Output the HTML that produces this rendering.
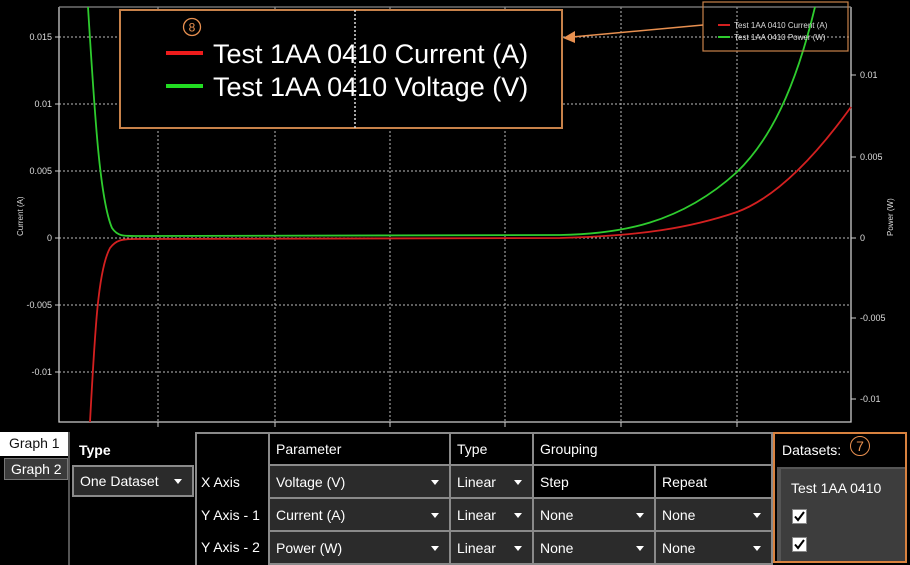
<!DOCTYPE html>
<html><head><meta charset="utf-8"><style>
*{margin:0;padding:0;box-sizing:border-box}
body{width:910px;height:565px;background:#000;overflow:hidden;position:relative;font-family:"Liberation Sans",sans-serif;color:#fff}
.a{position:absolute}
.cell{position:absolute;border:2px solid #8a8a8a;font-size:14px;padding-left:6px;display:flex;align-items:center;color:#fff}
.dd{background:#2b2b2b}
.dd::after{content:"";position:absolute;right:10px;top:50%;margin-top:-2px;border-left:4px solid transparent;border-right:4px solid transparent;border-top:5px solid #fff}
.hd{background:#000}
.cb{position:absolute;width:15px;height:15px;background:#fff;border:1px solid #888}
</style></head><body>
<svg class="a" style="left:0;top:0" width="910" height="430" xmlns="http://www.w3.org/2000/svg">
<g stroke="#bbb" stroke-width="1" stroke-dasharray="2,2">
<line x1="158" y1="7" x2="158" y2="422"/><line x1="275" y1="7" x2="275" y2="422"/><line x1="390" y1="7" x2="390" y2="422"/><line x1="505" y1="7" x2="505" y2="422"/><line x1="621" y1="7" x2="621" y2="422"/><line x1="737" y1="7" x2="737" y2="422"/>
<line x1="59" y1="37" x2="851" y2="37"/><line x1="59" y1="104" x2="851" y2="104"/><line x1="59" y1="171" x2="851" y2="171"/><line x1="59" y1="238" x2="851" y2="238"/><line x1="59" y1="305" x2="851" y2="305"/><line x1="59" y1="372" x2="851" y2="372"/>
</g>
<g stroke="#ccc" stroke-width="1.3" fill="none">
<polyline points="59,7 59,422 851,422 851,7"/>
<line x1="59" y1="7" x2="851" y2="7" stroke="#888"/>
</g>
<g stroke="#ccc" stroke-width="1">
<line x1="55" y1="37" x2="59" y2="37"/><line x1="55" y1="104" x2="59" y2="104"/><line x1="55" y1="171" x2="59" y2="171"/><line x1="55" y1="238" x2="59" y2="238"/><line x1="55" y1="305" x2="59" y2="305"/><line x1="55" y1="372" x2="59" y2="372"/>
<line x1="851" y1="75" x2="856" y2="75"/><line x1="851" y1="157" x2="856" y2="157"/><line x1="851" y1="238" x2="856" y2="238"/><line x1="851" y1="318" x2="856" y2="318"/><line x1="851" y1="399" x2="856" y2="399"/>
<line x1="158" y1="422" x2="158" y2="427"/><line x1="275" y1="422" x2="275" y2="427"/><line x1="390" y1="422" x2="390" y2="427"/><line x1="505" y1="422" x2="505" y2="427"/><line x1="621" y1="422" x2="621" y2="427"/><line x1="737" y1="422" x2="737" y2="427"/>
</g>
<g fill="#ddd" font-size="9" font-family="Liberation Sans">
<text x="52" y="40" text-anchor="end">0.015</text><text x="52" y="107" text-anchor="end">0.01</text><text x="52" y="174" text-anchor="end">0.005</text><text x="52" y="241" text-anchor="end">0</text><text x="52" y="308" text-anchor="end">-0.005</text><text x="52" y="375" text-anchor="end">-0.01</text>
<text x="860" y="78">0.01</text><text x="860" y="160">0.005</text><text x="860" y="241">0</text><text x="860" y="321">-0.005</text><text x="860" y="402">-0.01</text>
<text transform="translate(23,236) rotate(-90)" font-size="8">Current (A)</text>
<text transform="translate(893,236) rotate(-90)" font-size="8">Power (W)</text>
</g>
<path d="M88,7 C95,120 100,200 112,228 C118,237 125,236 140,236 L560,235 C620,234 680,224 737,172 C770,140 795,90 815,7" stroke="#2ecc2e" stroke-width="1.8" fill="none"/>
<path d="M90,422 C95,330 98,270 110,248 C116,240 122,239 135,239 L560,238 C640,236 690,228 737,212 C780,196 820,150 851,107" stroke="#d42020" stroke-width="1.8" fill="none"/>
<rect x="703" y="2" width="145" height="49" fill="none" stroke="#c8824a" stroke-width="1.2"/>
<line x1="718" y1="25" x2="730" y2="25" stroke="#d42020" stroke-width="2"/><line x1="718" y1="37" x2="730" y2="37" stroke="#2ecc2e" stroke-width="2"/>
<text x="734" y="28" fill="#ddd" font-size="8" font-family="Liberation Sans">Test 1AA 0410 Current (A)</text>
<text x="734" y="40" fill="#ddd" font-size="8" font-family="Liberation Sans">Test 1AA 0410 Power (W)</text>
<line x1="703" y1="25" x2="572" y2="37" stroke="#e89050" stroke-width="1.5"/>
<polygon points="563,38 575,31 575,43" fill="#e89050"/>
<rect x="120" y="10" width="442" height="118" fill="#000" stroke="#c8824a" stroke-width="2"/>
<line x1="355" y1="10" x2="355" y2="128" stroke="#ddd" stroke-width="1.5" stroke-dasharray="2,2"/>
<circle cx="192" cy="27" r="8.5" fill="none" stroke="#e89050" stroke-width="1.3"/>
<text x="192" y="31.5" fill="#e89050" font-size="12" text-anchor="middle" font-family="Liberation Sans">8</text>
<line x1="166" y1="53" x2="203" y2="53" stroke="#ee1c1c" stroke-width="4"/>
<line x1="166" y1="86" x2="203" y2="86" stroke="#22dd22" stroke-width="4"/>
<text x="213" y="63" fill="#fff" font-size="27" font-family="Liberation Sans">Test 1AA 0410 Current (A)</text>
<text x="213" y="96" fill="#fff" font-size="27" font-family="Liberation Sans">Test 1AA 0410 Voltage (V)</text>
</svg>

<div class="a" style="left:0;top:432px;width:68px;height:24px;background:#fff;color:#111;font-size:14px;padding:3px 0 0 9px">Graph 1</div>
<div class="a" style="left:4px;top:458px;width:64px;height:22px;background:#3a3a3a;border:1px solid #777;color:#fff;font-size:14px;padding:2px 0 0 6px">Graph 2</div>
<div class="a" style="left:68px;top:432px;width:2px;height:133px;background:#555"></div>
<div class="a" style="left:79px;top:442px;font-size:14px;font-weight:bold">Type</div>
<div class="cell dd" style="left:72px;top:465px;width:122px;height:32px">One Dataset</div>

<div class="a" style="left:195px;top:432px;width:578px;height:133px;border:2px solid #8a8a8a;border-bottom:none"></div>
<div class="a" style="left:201px;top:474px;font-size:14px">X Axis</div>
<div class="a" style="left:201px;top:507px;font-size:14px">Y Axis - 1</div>
<div class="a" style="left:201px;top:539px;font-size:14px">Y Axis - 2</div>

<div class="cell hd" style="left:268px;top:432px;width:183px;height:34px">Parameter</div>
<div class="cell hd" style="left:449px;top:432px;width:85px;height:34px">Type</div>
<div class="cell hd" style="left:532px;top:432px;width:241px;height:34px">Grouping</div>

<div class="cell dd" style="left:268px;top:464px;width:183px;height:35px">Voltage (V)</div>
<div class="cell dd" style="left:449px;top:464px;width:85px;height:35px">Linear</div>
<div class="cell hd" style="left:532px;top:464px;width:124px;height:35px">Step</div>
<div class="cell hd" style="left:654px;top:464px;width:119px;height:35px">Repeat</div>

<div class="cell dd" style="left:268px;top:497px;width:183px;height:35px">Current (A)</div>
<div class="cell dd" style="left:449px;top:497px;width:85px;height:35px">Linear</div>
<div class="cell dd" style="left:532px;top:497px;width:124px;height:35px">None</div>
<div class="cell dd" style="left:654px;top:497px;width:119px;height:35px">None</div>

<div class="cell dd" style="left:268px;top:530px;width:183px;height:35px">Power (W)</div>
<div class="cell dd" style="left:449px;top:530px;width:85px;height:35px">Linear</div>
<div class="cell dd" style="left:532px;top:530px;width:124px;height:35px">None</div>
<div class="cell dd" style="left:654px;top:530px;width:119px;height:35px">None</div>

<div class="a" style="left:773px;top:432px;width:134px;height:131px;border:2px solid #d9823f;background:#000"></div>
<div class="a" style="left:782px;top:442px;font-size:14px">Datasets:</div>
<div class="a" style="left:850px;top:436px;width:20px;height:20px;border:1.3px solid #e89050;border-radius:50%;color:#e89050;font-size:14px;text-align:center;line-height:18px">7</div>
<div class="a" style="left:777px;top:467px;width:128px;height:94px;background:#3d3d3d;border-left:4px solid #555;border-top:2px solid #555"></div>
<div class="a" style="left:791px;top:480px;font-size:14px">Test 1AA 0410</div>
<div class="cb" style="left:792px;top:509px"><svg width="13" height="13"><path d="M2,6.5 L5,10 L11,2" stroke="#000" stroke-width="2" fill="none"/></svg></div>
<div class="cb" style="left:792px;top:537px"><svg width="13" height="13"><path d="M2,6.5 L5,10 L11,2" stroke="#000" stroke-width="2" fill="none"/></svg></div>
</body></html>
